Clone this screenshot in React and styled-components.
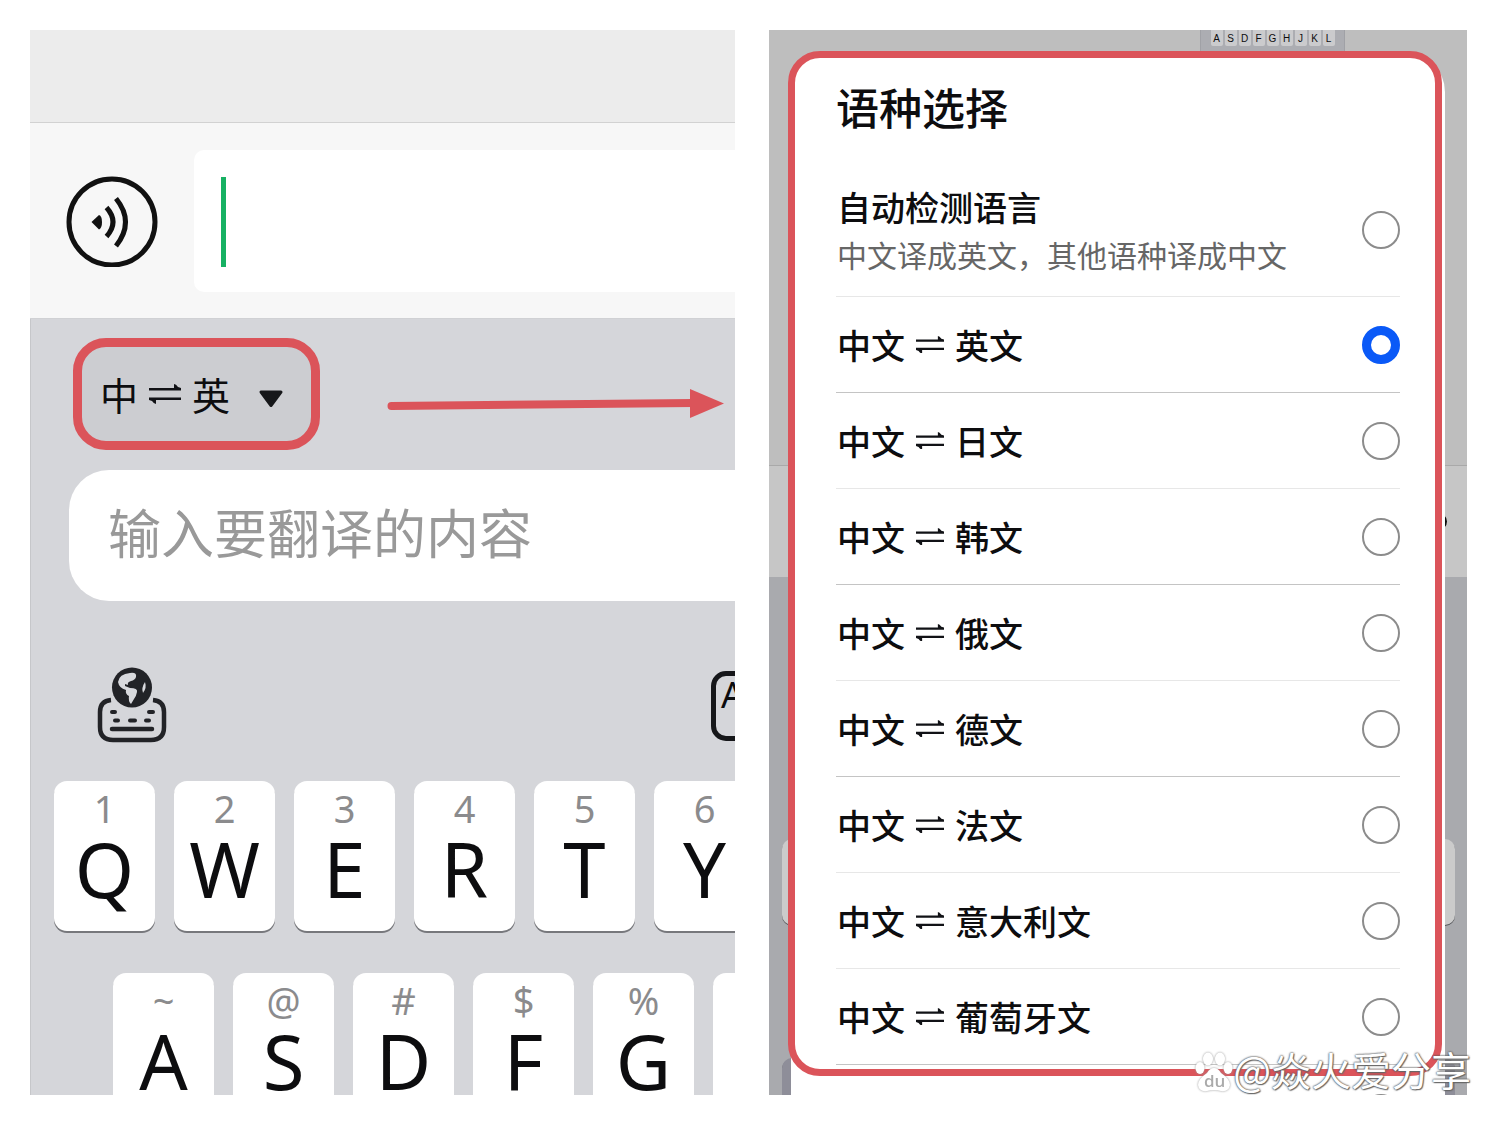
import React, { useState } from "react";
import styled, { createGlobalStyle } from "styled-components";

const GlobalStyle = createGlobalStyle`
  * {
    box-sizing: border-box;
  }

  body {
    margin: 0;
    background: #fff;
    font-family: "Noto Sans", "Noto Sans CJK SC", sans-serif;
    color: #0d0d0f;
  }

  button,
  input {
    font-family: inherit;
    color: inherit;
  }
`;

const Page = styled.main`
  position: relative;
  display: grid;
  grid-template-columns: 705fr 698fr;
  gap: 34px;
  height: 100vh;
  padding: 30px 33px 29px 30px;
  overflow: hidden;
`;

const Shot = styled.section`
  position: relative;
  min-width: 0;
  overflow: hidden;
`;

/* chat screen */

const TopBar = styled.div`
  height: 93px;
  background: #ececec;
  border-bottom: 1px solid #d2d2d2;
`;

const ChatBar = styled.div`
  display: flex;
  align-items: center;
  gap: 36px;
  height: 196px;
  padding: 0 0 0 36px;
  background: #f7f7f7;
  border-bottom: 1px solid #d0d1d4;
`;

const IconButton = styled.button`
  display: flex;
  flex: none;
  padding: 0;
  border: 0;
  background: none;
`;

const MessageBox = styled.label`
  display: flex;
  flex: 1;
  align-items: center;
  height: 142px;
  padding: 2px 0 0 27px;
  background: #fff;
  border-radius: 10px 0 0 10px;
`;

const Caret = styled.span`
  width: 5px;
  height: 90px;
  background: #17b163;
`;

const MessageInput = styled.input`
  flex: 1;
  min-width: 0;
  border: 0;
  outline: 0;
  font-size: 53px;
  background: none;
`;

const Keyboard = styled.div`
  min-height: 776px;
  padding-top: 19px;
  background: #d5d6da;
  border-left: 1px solid #c6c7ca;
`;

const TranslateBar = styled.div`
  display: flex;
  align-items: center;
  gap: 67px;
  margin-left: 42px;
`;

const LanguageButton = styled.button`
  display: flex;
  align-items: center;
  width: 247px;
  height: 112px;
  padding: 0 0 0 18px;
  border: 9px solid #db545a;
  border-radius: 33px;
  background: #cccdd1;
  font-family: "Noto Sans CJK SC", sans-serif;
  font-size: 38px;
  line-height: 56px;
`;

const SwapMark = styled.svg`
  flex: none;
  margin: 0 ${(props) => props.$gap}px;
`;

const DropMark = styled.svg`
  margin: 10px 0 0 28px;
`;

const Pointer = styled.svg`
  margin-top: 18px;
`;

const SourceInput = styled.input`
  display: block;
  width: calc(100% - 38px);
  height: 131px;
  margin: 20px 0 0 38px;
  padding: 0 0 10px 39px;
  border: 0;
  border-radius: 40px 0 0 40px;
  background: #fff;
  font-family: "Noto Sans CJK SC", sans-serif;
  font-size: 53px;

  &::placeholder {
    color: #999;
    opacity: 1;
  }
`;

const ToolRow = styled.div`
  display: flex;
  align-items: center;
  gap: 544px;
  height: 80px;
  margin: 65px 0 35px 66px;
`;

const TranslateKey = styled.button`
  display: flex;
  flex: none;
  width: 76px;
  height: 70px;
  padding: 0 0 0 5px;
  border: 5px solid #16171a;
  border-radius: 15px;
  background: none;
  font-size: 36px;
  line-height: 38px;
`;

const KeyRow = styled.div`
  display: flex;
  gap: 19px;
  margin-left: ${(props) => props.$indent}px;
  margin-bottom: 42px;
`;

const Key = styled.button`
  display: flex;
  flex: none;
  flex-direction: column;
  align-items: center;
  width: 101px;
  height: 150px;
  padding: 0;
  border: 0;
  border-radius: 13px;
  background: #fff;
  box-shadow: 0 2px 0 #77787c;
`;

const KeyHint = styled.span`
  height: 50px;
  font-size: 38px;
  line-height: 54px;
  color: #8b8b8d;
`;

const KeyLetter = styled.span`
  font-size: 76px;
  line-height: 76px;
`;

/* language dialog screen */

const Backdrop = styled.div`
  position: absolute;
  inset: 0;
  display: flex;
  flex-direction: column;
  overflow: hidden;
`;

const DimHistory = styled.div`
  display: flex;
  flex: none;
  justify-content: flex-end;
  align-items: flex-start;
  height: 436px;
  padding-right: 122px;
  background: #bebebe;
  border-bottom: 1px solid #a9a9a9;
`;

const DimChatBar = styled.div`
  display: flex;
  flex: none;
  justify-content: flex-end;
  align-items: center;
  height: 111px;
  padding-right: 20px;
  background: #c6c6c6;
`;

const DimDot = styled.span`
  width: 17px;
  height: 17px;
  border-radius: 50%;
  background: #0c0c0c;
`;

const DimKeyboard = styled.div`
  flex: none;
  padding: 262px 12px 0 13px;
  background: #a9aaae;
`;

const DimKey = styled.div`
  height: 86px;
  margin-bottom: 133px;
  border-radius: 10px;
  background: ${(props) => props.$color};
  box-shadow: 0 1px 0 #55565a;
`;

const MiniKeyboard = styled.div`
  display: flex;
  justify-content: center;
  gap: 2px;
  width: 145px;
  height: 24px;
  background: #acadb2;
  border: 1px solid #a0a1a6;
  border-top: 0;
`;

const MiniKey = styled.span`
  width: 12px;
  height: 16px;
  border-radius: 0 0 2px 2px;
  background: #cbcbcd;
  font-family: "Liberation Sans", sans-serif;
  font-size: 10px;
  line-height: 17px;
  text-align: center;
`;

const Dialog = styled.form`
  position: relative;
  height: calc(100% - 22px);
  margin: 22px 22px 0;
  padding: 30px 45px 0;
  border-radius: 32px 40px 0 0;
  background: #fff;
  font-family: "Noto Sans CJK SC", sans-serif;
`;

const Marker = styled.div`
  position: absolute;
  inset: 21px 25px 19px 19px;
  border: 7px solid #db545a;
  border-radius: 32px;
`;

const DialogTitle = styled.h1`
  margin: 0;
  font-size: 43px;
  font-weight: 500;
  line-height: 48px;
`;

const Options = styled.div`
  padding-top: 34px;
`;

const Option = styled.label`
  display: flex;
  justify-content: space-between;
  align-items: center;
  height: ${(props) => (props.$tall ? 133 : 96)}px;
  border-bottom: 1px solid ${(props) => (props.$strong ? "#c4c4c4" : "#e7e7e7")};
  font-size: 34px;
  font-weight: 500;
  line-height: 48px;
`;

const OptionText = styled.span`
  padding-left: 1px;
`;

const Pair = styled.span`
  display: flex;
  align-items: center;
  padding: 0 0 0 1px;
`;

const Note = styled.small`
  display: block;
  font-size: 30px;
  font-weight: 400;
  line-height: 46px;
  color: #666;
`;

const Radio = styled.input`
  appearance: none;
  flex: none;
  width: 38px;
  height: 38px;
  margin: 0;
  border: 2px solid #8c8c8c;
  border-radius: 50%;
  background: #fff;

  &:checked {
    border: 9px solid #0a59f7;
  }
`;

const Watermark = styled.div`
  position: absolute;
  right: 29px;
  bottom: 30px;
  display: flex;
  align-items: center;
  font-family: "Noto Sans CJK SC", sans-serif;
  font-size: 40px;
  line-height: 50px;
  color: #fff;
  text-shadow: 0 0 2px #555, 0 0 2px #555, 1px 1px 1px #777;
`;

const PawMark = styled.svg`
  margin-top: 8px;
  filter: drop-shadow(0 0 1px #999);
`;

const PawText = styled.text`
  font-family: "Open Sans", sans-serif;
  font-size: 17px;
  font-weight: 600;
  fill: #aaa;
  text-shadow: none;
`;

const topKeys = [
  ["1", "Q"],
  ["2", "W"],
  ["3", "E"],
  ["4", "R"],
  ["5", "T"],
  ["6", "Y"],
];

const homeKeys = [
  ["~", "A"],
  ["@", "S"],
  ["#", "D"],
  ["$", "F"],
  ["%", "G"],
  ["", ""],
];

const languages = [
  { name: "英文", strong: true },
  { name: "日文" },
  { name: "韩文", strong: true },
  { name: "俄文" },
  { name: "德文", strong: true },
  { name: "法文" },
  { name: "意大利文" },
  { name: "葡萄牙文", strong: true },
];

const VoiceIcon = () => (
  <svg width="92" height="92" viewBox="0 0 92 92" fill="none" stroke="#111" strokeWidth="5">
    <circle cx="46" cy="47" r="43" />
    <path d="M25.500 47 L33 40 Q36 41 36 47 Q36 53 33 54.500 Z" fill="#111" stroke="none" />
    <path d="M40.500 32.500 Q53.500 47 40.500 61.500" />
    <path d="M50 23.500 Q69 47 50 71" />
  </svg>
);

const GlobeKeyboardIcon = () => (
  <svg width="70" height="78" viewBox="0 0 70 78" fill="none" stroke="#222327" strokeLinecap="round">
    <path
      d="M14 33 Q3 34 3 45 V60 Q3 73 16 73 H54 Q67 73 67 60 V45 Q67 34 56 33"
      strokeWidth="4.500"
      strokeLinecap="butt"
    />
    <circle cx="35" cy="20.500" r="20" fill="#222327" stroke="none" />
    <path
      d="M21 15 Q22 7 33 6 Q40 5 39 10 Q38 13 34 14 Q30 15 31 18 L28 17 L28 19 L33 21 Q41 21 40 25 Q39 30 37 32 L34 37 Q31 34 32 29 Q28 27 29 23 Q22 21 21 15 Z"
      fill="#d8d9dd"
      stroke="none"
    />
    <path d="M48 15 Q44 21 46 26 Q50 21 48 15 Z" fill="#d8d9dd" stroke="none" />
    <path d="M15 45 H18 M52 45 H56 M18 53.500 H21 M33 53.500 H38 M49 53.500 H52" strokeWidth="4" />
    <path d="M15 62 H55" strokeWidth="4.500" />
  </svg>
);

const SwapIcon = ({ width, gap }) => (
  <SwapMark
    $gap={gap}
    width={width}
    height={(width * 20) / 32}
    viewBox="0 0 32 20"
    fill="#111216"
    role="img"
    aria-label="⇌"
  >
    <path d="M0 4 H25 V0 Q27 0 29 3 L32 4 V6.500 H0 Z" />
    <path d="M32 16 H7 V20 Q5 20 3 17 L0 16 V13.500 H32 Z" />
  </SwapMark>
);

const PawIcon = () => (
  <PawMark width="38" height="42" viewBox="0 0 38 42" fill="#fff">
    <ellipse cx="13" cy="7" rx="5" ry="6.500" />
    <ellipse cx="25" cy="7" rx="5" ry="6.500" />
    <ellipse cx="5" cy="16" rx="4.500" ry="6" />
    <ellipse cx="33" cy="16" rx="4.500" ry="6" />
    <path d="M19 16 Q23 16 26 21 Q35 27 35 33 Q34 40 26 39 Q19 37 12 39 Q4 40 3 33 Q3 27 12 21 Q15 16 19 16 Z" />
    <PawText x="9" y="35">
      du
    </PawText>
  </PawMark>
);

const Keys = ({ keys, indent }) => (
  <KeyRow $indent={indent}>
    {keys.map(([hint, letter]) => (
      <Key key={letter} type="button">
        <KeyHint>{hint}</KeyHint>
        <KeyLetter>{letter}</KeyLetter>
      </Key>
    ))}
  </KeyRow>
);

const ChatScreen = () => (
  <Shot>
    <TopBar />
    <ChatBar>
      <IconButton type="button" aria-label="语音">
        <VoiceIcon />
      </IconButton>
      <MessageBox>
        <Caret />
        <MessageInput aria-label="消息" />
      </MessageBox>
    </ChatBar>
    <Keyboard>
      <TranslateBar>
        <LanguageButton type="button">
          中
          <SwapIcon width={32} gap={11} />
          英
          <DropMark width="26" height="18" viewBox="0 0 26 18">
            <path d="M3 2 H23 L13 15.500 Z" fill="#16171a" stroke="#16171a" strokeWidth="3" strokeLinejoin="round" />
          </DropMark>
        </LanguageButton>
        <Pointer width="338" height="32" viewBox="0 0 338 32">
          <path d="M4.500 19 L306 16" stroke="#db545a" strokeWidth="8" strokeLinecap="round" />
          <path d="M303 2 L337 16.500 L303 31 Z" fill="#db545a" />
        </Pointer>
      </TranslateBar>
      <SourceInput aria-label="翻译" placeholder="输入要翻译的内容" />
      <ToolRow>
        <IconButton type="button" aria-label="键盘">
          <GlobeKeyboardIcon />
        </IconButton>
        <TranslateKey type="button">A</TranslateKey>
      </ToolRow>
      <Keys keys={topKeys} indent={23} />
      <Keys keys={homeKeys} indent={82} />
    </Keyboard>
  </Shot>
);

const LanguageScreen = () => {
  const [selected, setSelected] = useState("英文");

  return (
    <Shot>
      <Backdrop>
        <DimHistory>
          <MiniKeyboard>
            {"ASDFGHJKL".split("").map((letter) => (
              <MiniKey key={letter}>{letter}</MiniKey>
            ))}
          </MiniKeyboard>
        </DimHistory>
        <DimChatBar>
          <DimDot />
        </DimChatBar>
        <DimKeyboard>
          <DimKey $color="#cbcbcb" />
          <DimKey $color="#8e8e99" />
        </DimKeyboard>
      </Backdrop>
      <Dialog>
        <DialogTitle>语种选择</DialogTitle>
        <Options>
          <Option $tall>
            <OptionText>
              自动检测语言
              <Note>中文译成英文，其他语种译成中文</Note>
            </OptionText>
            <Radio
              type="radio"
              name="language"
              checked={selected === "auto"}
              onChange={() => setSelected("auto")}
            />
          </Option>
          {languages.map(({ name, strong }) => (
            <Option key={name} $strong={strong}>
              <Pair>
                中文
                <SwapIcon width={28} gap={11} />
                {name}
              </Pair>
              <Radio
                type="radio"
                name="language"
                checked={selected === name}
                onChange={() => setSelected(name)}
              />
            </Option>
          ))}
          <Option>
            <Pair />
            <Radio type="radio" name="language" aria-label="更多" />
          </Option>
        </Options>
      </Dialog>
      <Marker />
    </Shot>
  );
};

const App = () => (
  <>
    <GlobalStyle />
    <Page>
      <ChatScreen />
      <LanguageScreen />
      <Watermark>
        <PawIcon />
        @焱火爱分享
      </Watermark>
    </Page>
  </>
);

export default App;
